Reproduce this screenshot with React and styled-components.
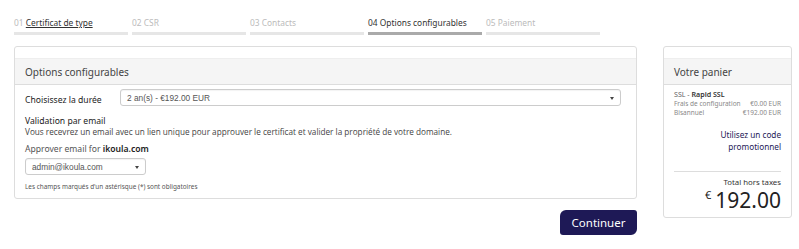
import React from "react";
import styled, { createGlobalStyle } from "styled-components";

const Global = createGlobalStyle`
  html, body { margin: 0; padding: 0; background: #fff; }
  body { font-family: "Noto Sans", "Open Sans", sans-serif; color: #333; }
  * { box-sizing: border-box; }
`;

const Page = styled.div`
  padding: 17px 7px 0 14px;
  width: 799px;
`;

const Steps = styled.div`
  display: flex;
  gap: 4px;
  width: 586px;
`;

const Step = styled.div`
  width: 114px;
  display: flex;
  flex-direction: column;
  gap: 3px;
  font-size: 8.4px;
  line-height: 12px;
  color: ${p => (p.$active ? "#333" : "#bbb")};
  white-space: nowrap;
  &::after {
    content: "";
    display: block;
    height: 3px;
    background: ${p => (p.$active ? "#aaa" : "#e6e6e6")};
  }
`;

const Num = styled.span`
  color: #bbb;
`;

const StepLink = styled.span`
  color: #333;
  text-decoration: underline;
`;

const Main = styled.div`
  display: flex;
  gap: 26px;
  margin-top: 11px;
  align-items: flex-start;
`;

const Left = styled.div`
  width: 623px;
  display: flex;
  flex-direction: column;
  align-items: flex-end;
`;

const Panel = styled.div`
  width: ${p => p.$w}px;
  border: 1px solid #ddd;
  border-radius: 3px;
  padding-top: 11px;
  background: #fff;
`;

const PanelHead = styled.div`
  background: #f5f5f5;
  border-top: 1px solid #eee;
  border-bottom: 1px solid #ddd;
  height: 27px;
  display: flex;
  align-items: center;
  padding-left: 10px;
  font-size: 10px;
  color: #444;
`;

const Body = styled.div`
  padding: 4px 10px 7px 10px;
`;

const Row = styled.div`
  display: flex;
  align-items: center;
`;

const Label = styled.div`
  width: 95px;
  font-size: 8.6px;
  color: #222;
  padding-top: 4px;
`;

const Select = styled.div`
  position: relative;
  width: ${p => p.$w}px;
  height: 17px;
  border: 1px solid #ccc;
  border-radius: 3px;
  background: #fff;
  box-shadow: inset 0 1px 1px rgba(0,0,0,0.05);
  font-family: "Liberation Sans", Arial, sans-serif;
  font-size: 8.3px;
  color: #555;
  display: flex;
  align-items: center;
  padding-left: 6px;
  &::after {
    content: "";
    position: absolute;
    right: 6px;
    top: 7px;
    border-left: 2px solid transparent;
    border-right: 2px solid transparent;
    border-top: 3px solid #444;
  }
`;

const SubTitle = styled.div`
  margin-top: 10px;
  font-size: 8.6px;
  color: #222;
  line-height: 11px;
`;

const Text = styled.div`
  font-family: "Open Sans", sans-serif;
  font-size: 8.2px;
  color: #444;
  line-height: 10px;
`;

const Approver = styled.div`
  margin-top: 6px;
  font-size: 8.6px;
  color: #555;
  line-height: 12px;
  margin-bottom: 3px;
  b { color: #222; font-weight: 600; }
`;

const Note = styled.div`
  margin-top: 7px;
  font-size: 6.4px;
  color: #555;
  line-height: 9px;
`;

const Button = styled.button`
  margin-top: 11px;
  width: 77px;
  height: 25px;
  border: none;
  border-radius: 6px 3px 6px 3px;
  background: #1e1956;
  color: #fff;
  font-family: "Noto Sans", sans-serif;
  font-size: 11.5px;
  padding: 0;
  cursor: pointer;
`;

const Cart = styled.div`
  padding: 4px 10px 6px 10px;
  font-size: 6.5px;
  color: #777;
`;

const Item = styled.div`
  font-size: 7.1px;
  line-height: 10px;
  color: #666;
  b { color: #333; font-weight: 600; }
`;

const Line = styled.div`
  display: flex;
  justify-content: space-between;
  line-height: 9px;
  color: #888;
`;

const Promo = styled.div`
  margin-top: 12px;
  text-align: right;
  font-size: 8.2px;
  line-height: 12px;
  color: #1e1956;
  padding-bottom: 18px;
  border-bottom: 1px solid #ddd;
`;

const TotalLabel = styled.div`
  margin-top: 5px;
  text-align: right;
  font-size: 7.8px;
  color: #333;
  line-height: 10px;
`;

const Total = styled.div`
  margin-top: 2px;
  display: flex;
  justify-content: flex-end;
  align-items: flex-start;
  gap: 4px;
  color: #222;
  line-height: 22px;
  font-size: 21px;
`;

const Cur = styled.span`
  font-size: 11px;
  line-height: 12px;
`;

export default function App() {
  return (
    <>
      <Global />
      <Page>
        <Steps>
          <Step>
            <span><Num>01</Num> <StepLink>Certificat de type</StepLink></span>
          </Step>
          <Step>02 CSR</Step>
          <Step>03 Contacts</Step>
          <Step $active>04 Options configurables</Step>
          <Step>05 Paiement</Step>
        </Steps>
        <Main>
          <Left>
            <Panel $w={623}>
              <PanelHead>Options configurables</PanelHead>
              <Body>
                <Row>
                  <Label>Choisissez la durée</Label>
                  <Select $w={501}>2 an(s) - €192.00 EUR</Select>
                </Row>
                <SubTitle>Validation par email</SubTitle>
                <Text>Vous recevrez un email avec un lien unique pour approuver le certificat et valider la propriété de votre domaine.</Text>
                <Approver>Approver email for <b>ikoula.com</b></Approver>
                <Select $w={121}>admin@ikoula.com</Select>
                <Note>Les champs marqués d'un astérisque (*) sont obligatoires</Note>
              </Body>
            </Panel>
            <Button>Continuer</Button>
          </Left>
          <Panel $w={130}>
            <PanelHead>Votre panier</PanelHead>
            <Cart>
              <Item>SSL - <b>Rapid SSL</b></Item>
              <Line><span>Frais de configuration</span><span>€0.00 EUR</span></Line>
              <Line><span>Bisannuel</span><span>€192.00 EUR</span></Line>
              <Promo>Utilisez un code<br />promotionnel</Promo>
              <TotalLabel>Total hors taxes</TotalLabel>
              <Total><Cur>€</Cur><span>192.00</span></Total>
            </Cart>
          </Panel>
        </Main>
      </Page>
    </>
  );
}
